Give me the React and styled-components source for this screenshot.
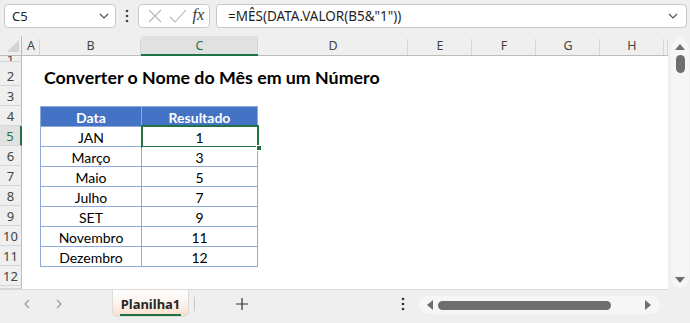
import React from "react";
import styled, { createGlobalStyle, css } from "styled-components";

const Global = createGlobalStyle`
  html, body { margin: 0; padding: 0; background: #efefef; }
  body { width: 690px; height: 323px; overflow: hidden; font-family: "Noto Sans", "Open Sans", sans-serif; }
  * { box-sizing: border-box; }
`;

const Frame = styled.div`
  width: 690px;
  height: 323px;
  display: flex;
  flex-direction: column;
  background: #efefef;
`;

/* ---------- Top formula bar ---------- */
const TopBar = styled.div`
  height: 36px;
  display: flex;
  align-items: flex-start;
  padding: 4px 3px 0 4px;
`;

const Box = styled.div`
  height: 24px;
  background: #fff;
  border: 1px solid #c8c8c8;
  border-radius: 4px;
  display: flex;
  align-items: center;
`;

const NameBox = styled(Box)`
  width: 112px;
  padding: 0 6px 0 7px;
  justify-content: space-between;
  font-size: 13px;
  color: #222;
`;

const DotsSlot = styled.div`
  width: 22px;
  height: 24px;
  display: flex;
  align-items: center;
  justify-content: center;
`;

const FxBox = styled(Box)`
  width: 72px;
  padding: 0 5px 0 8px;
  justify-content: space-between;
`;

const FxText = styled.span`
  font-family: "Liberation Serif", "DejaVu Serif", serif;
  font-style: italic;
  font-size: 16px;
  color: #333;
  margin-top: -3px;
`;

const FormulaBox = styled(Box)`
  flex: 1;
  margin-left: 6px;
  padding: 0 8px 0 11px;
  justify-content: space-between;
  font-size: 13.5px;
  color: #1f1f1f;
`;

/* ---------- Sheet ---------- */
const Middle = styled.div`
  height: 254px;
  display: flex;
`;

const Sheet = styled.div`
  width: 668px;
  height: 254px;
  background: #fff;
  display: grid;
  grid-template-columns: 22px 18px 101px 117px 150px 64px 64px 64px 64px 1fr;
  grid-template-rows: 20px 6px 24px repeat(10, 20px) 1fr;
  overflow: hidden;
  border-bottom: 1px solid #d8d8d8;
`;

const Corner = styled.div`
  grid-column: 1;
  grid-row: 1;
  background: #efefef;
  border-right: 1px solid #bdbdbd;
  border-bottom: 1px solid #bdbdbd;
  display: flex;
  align-items: flex-end;
  justify-content: flex-end;
  padding: 0 2px 3px 0;
`;

const ColHeader = styled.div`
  grid-row: 1;
  background: ${(p) => (p.$active ? "#e1e1e1" : "#efefef")};
  color: ${(p) => (p.$active ? "#217346" : "#444")};
  border-bottom: ${(p) => (p.$active ? "2px solid #217346" : "1px solid #bdbdbd")};
  display: flex;
  align-items: center;
  justify-content: center;
  font-size: 12.5px;
  position: relative;
  padding-top: ${(p) => (p.$active ? "1px" : "0")};
  &::after {
    content: "";
    position: absolute;
    right: 0;
    top: 3px;
    bottom: 0;
    width: 1px;
    background: #d6d6d6;
  }
`;

const RowHeader = styled.div`
  grid-column: 1;
  background: ${(p) => (p.$active ? "#e1e1e1" : "#efefef")};
  color: ${(p) => (p.$active ? "#217346" : "#444")};
  border-right: ${(p) => (p.$active ? "2px solid #217346" : "1px solid #bdbdbd")};
  border-bottom: 1px solid #d6d6d6;
  display: flex;
  align-items: flex-end;
  justify-content: center;
  font-size: 13px;
  line-height: 18px;
  overflow: hidden;
  ${(p) =>
    p.$tiny &&
    css`
      align-items: center;
    `}
`;

const Title = styled.div`
  grid-column: 3 / 8;
  grid-row: 3;
  display: flex;
  align-items: flex-end;
  padding: 0 0 0 4px;
  margin-bottom: -2px;
  font-family: Lato, "Open Sans", sans-serif;
  font-weight: 700;
  font-size: 17.8px;
  color: #000;
  white-space: nowrap;
`;

const DataTable = styled.div`
  grid-column: 3 / 5;
  grid-row: 5 / 13;
  align-self: start;
  height: 161px;
  display: grid;
  grid-template-columns: 100px 115px;
  grid-auto-rows: 19px;
  gap: 1px;
  padding: 1px;
  background: #8ea9db;
  font-family: Lato, "Open Sans", sans-serif;
  font-size: 14px;
`;

const TCell = styled.div`
  position: relative;
  display: flex;
  align-items: center;
  justify-content: center;
  background: ${(p) => (p.$head ? "#4472c4" : "#fff")};
  color: ${(p) => (p.$head ? "#fff" : "#000")};
  font-weight: ${(p) => (p.$head ? 700 : 400)};
  padding-top: 1px;
`;

const Selection = styled.div`
  position: absolute;
  top: -2px;
  left: -1px;
  right: -2px;
  bottom: -2px;
  border: 2px solid #217346;
  pointer-events: none;
`;

const Handle = styled.div`
  position: absolute;
  right: -5px;
  bottom: -5px;
  width: 6px;
  height: 6px;
  background: #217346;
  border: 1px solid #fff;
`;

/* ---------- Vertical scrollbar ---------- */
const VScroll = styled.div`
  flex: 1;
  display: flex;
  justify-content: center;
  padding: 2px 0 2px 2px;
`;

const VTrack = styled.div`
  width: 18px;
  border-radius: 9px;
  background: #f6f6f6;
  display: flex;
  flex-direction: column;
  align-items: center;
  padding: 4px 0 3px;
`;

const VThumb = styled.div`
  width: 9px;
  height: 18px;
  border-radius: 5px;
  background: #6e6e6e;
  margin-top: 3px;
`;

const Spacer = styled.div`
  flex: 1;
`;

/* ---------- Bottom bar ---------- */
const BottomBar = styled.div`
  height: 33px;
  display: flex;
  align-items: flex-start;
`;

const NavArrows = styled.div`
  width: 112px;
  height: 28px;
  display: flex;
  align-items: center;
  padding-left: 23px;
  gap: 21px;
`;

const Tab = styled.div`
  width: 77px;
  height: 27px;
  margin-top: 0;
  border: 1px solid #dcdcdc;
  border-top: none;
  border-radius: 0 0 6px 6px;
  background: linear-gradient(#ffffff 0%, #fdf1e8 55%, #f9dfcc 100%);
  display: flex;
  flex-direction: column;
  align-items: center;
  padding-top: 5px;
  font-weight: 700;
  font-size: 13px;
  color: #262626;
`;

const TabLine = styled.div`
  width: 61px;
  height: 2px;
  background: #1e7145;
  margin-top: 1px;
`;

const TabSep = styled.div`
  width: 1px;
  height: 14px;
  background: #c9c9c9;
  margin: 7px 0 0 5px;
`;

const AddBtn = styled.div`
  width: 94px;
  height: 28px;
  display: flex;
  align-items: center;
  justify-content: center;
`;

const BottomDots = styled.div`
  width: 130px;
  height: 28px;
  display: flex;
  align-items: center;
  justify-content: flex-end;
  padding-right: 14px;
`;

const HScroll = styled.div`
  width: 241px;
  height: 18px;
  margin-top: 6px;
  border-radius: 9px;
  background: #f6f6f6;
  display: flex;
  align-items: center;
  padding: 0 7px 0 6px;
  gap: 3px;
`;

const HThumb = styled.div`
  width: 173px;
  height: 9px;
  border-radius: 5px;
  background: #6e6e6e;
`;

const cols = [
  { l: "A", c: 2 },
  { l: "B", c: 3 },
  { l: "C", c: 4, active: true },
  { l: "D", c: 5 },
  { l: "E", c: 6 },
  { l: "F", c: 7 },
  { l: "G", c: 8 },
  { l: "H", c: 9 },
  { l: "", c: 10 },
];

const rows = [
  { n: 1, r: 2, tiny: true },
  { n: 2, r: 3 },
  { n: 3, r: 4 },
  { n: 4, r: 5 },
  { n: 5, r: 6, active: true },
  { n: 6, r: 7 },
  { n: 7, r: 8 },
  { n: 8, r: 9 },
  { n: 9, r: 10 },
  { n: 10, r: 11 },
  { n: 11, r: 12 },
  { n: 12, r: 13 },
  { n: "", r: 14 },
];

const data = [
  ["JAN", "1"],
  ["Março", "3"],
  ["Maio", "5"],
  ["Julho", "7"],
  ["SET", "9"],
  ["Novembro", "11"],
  ["Dezembro", "12"],
];

const Chevron = ({ dir = "down", color = "#555", size = 10 }) => {
  const pts = {
    down: "1,3 5,7 9,3",
    left: "6,1 2,5 6,9",
    right: "3,1 7,5 3,9",
  }[dir];
  return (
    <svg width={size} height={size} viewBox="0 0 10 10">
      <polyline points={pts} fill="none" stroke={color} strokeWidth="1.2" />
    </svg>
  );
};

const VDots = ({ color = "#444" }) => (
  <svg width="4" height="14" viewBox="0 0 4 14">
    <circle cx="2" cy="2" r="1.3" fill={color} />
    <circle cx="2" cy="7" r="1.3" fill={color} />
    <circle cx="2" cy="12" r="1.3" fill={color} />
  </svg>
);

const Tri = ({ dir }) => {
  const pts = {
    up: "0,8 5,2 10,8",
    down: "0,2 5,8 10,2",
    left: "8,0 2,5 8,10",
    right: "2,0 8,5 2,10",
  }[dir];
  return (
    <svg width="10" height="10" viewBox="0 0 10 10">
      <polygon points={pts} fill="#6e6e6e" />
    </svg>
  );
};

export default function App() {
  return (
    <>
      <Global />
      <Frame>
        <TopBar>
          <NameBox>
            <span>C5</span>
            <Chevron />
          </NameBox>
          <DotsSlot>
            <VDots />
          </DotsSlot>
          <FxBox>
            <svg width="16" height="16" viewBox="0 0 16 16">
              <path d="M2 2 L14 14 M14 2 L2 14" stroke="#b5b5b5" strokeWidth="1.1" />
            </svg>
            <svg width="18" height="16" viewBox="0 0 18 16">
              <polyline points="1,9 6,14 17,2" fill="none" stroke="#b5b5b5" strokeWidth="1.1" />
            </svg>
            <FxText>fx</FxText>
          </FxBox>
          <FormulaBox>
            <span>=MÊS(DATA.VALOR(B5&amp;"1"))</span>
            <Chevron />
          </FormulaBox>
        </TopBar>

        <Middle>
          <Sheet>
            <Corner>
              <svg width="12" height="12" viewBox="0 0 12 12">
                <polygon points="12,0 12,12 0,12" fill="#d3d3d3" />
              </svg>
            </Corner>
            {cols.map((c) => (
              <ColHeader key={c.c} $active={c.active} style={{ gridColumn: c.c }}>
                {c.l}
              </ColHeader>
            ))}
            {rows.map((r) => (
              <RowHeader key={r.r} $active={r.active} $tiny={r.tiny} style={{ gridRow: r.r }}>
                {r.n}
              </RowHeader>
            ))}
            <Title>Converter o Nome do Mês em um Número</Title>
            <DataTable>
              <TCell $head>Data</TCell>
              <TCell $head>Resultado</TCell>
              {data.map(([m, v], i) => (
                <React.Fragment key={m}>
                  <TCell>{m}</TCell>
                  <TCell>
                    {v}
                    {i === 0 && (
                      <Selection>
                        <Handle />
                      </Selection>
                    )}
                  </TCell>
                </React.Fragment>
              ))}
            </DataTable>
          </Sheet>
          <VScroll>
            <VTrack>
              <Tri dir="up" />
              <VThumb />
              <Spacer />
              <Tri dir="down" />
            </VTrack>
          </VScroll>
        </Middle>

        <BottomBar>
          <NavArrows>
            <Chevron dir="left" color="#9a9a9a" size={10} />
            <Chevron dir="right" color="#9a9a9a" size={10} />
          </NavArrows>
          <Tab>
            <span>Planilha1</span>
            <TabLine />
          </Tab>
          <TabSep />
          <AddBtn>
            <svg width="14" height="14" viewBox="0 0 14 14">
              <path d="M7 1 V13 M1 7 H13" stroke="#333" strokeWidth="1.2" />
            </svg>
          </AddBtn>
          <BottomDots>
            <VDots color="#333" />
          </BottomDots>
          <HScroll>
            <Tri dir="left" />
            <HThumb />
            <Spacer />
            <Tri dir="right" />
          </HScroll>
        </BottomBar>
      </Frame>
    </>
  );
}
